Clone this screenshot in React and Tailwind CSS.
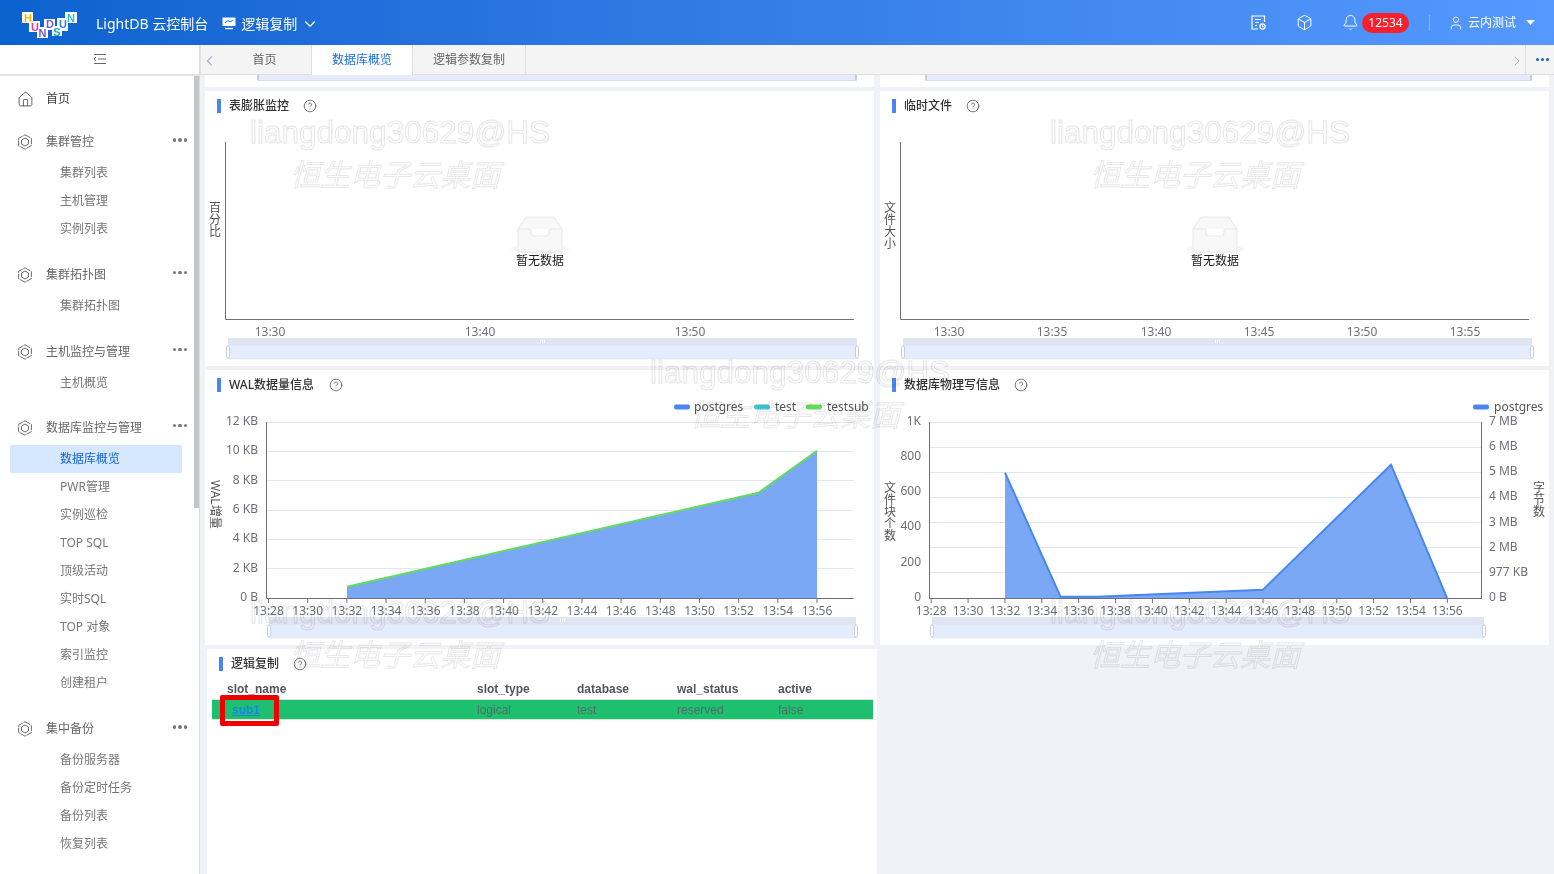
import React from 'react';
import { House, Box, Bell, User, ChevronDown, ChevronLeft, ChevronRight, CircleHelp } from 'lucide-react';

const FONT = '"Noto Sans","Noto Sans CJK SC",sans-serif';

function Logo() {
  const tiles = [[22,13,11,11],[29,22,11,11],[37,28,11,11],[44,20,11,11],[52,27,10,10],[57,19,11,13],[65,13,12,11]];
  const letters = [['H',28,23,'#f7b500'],['U',35,32,'#e0389a'],['N',42.5,37.5,'#6a5bd6'],['D',50,29,'#7a5bd6'],['S',57,36.5,'#18a7b5'],['U',63,29,'#2f7fe0'],['N',71,22.5,'#2cc0d8']];
  return (
    <svg width="70" height="30" viewBox="15 9 70 30" className="shrink-0">
      {tiles.map((t,i)=><rect key={i} x={t[0]} y={t[1]} width={t[2]} height={t[3]} fill="#fff"/>)}
      {letters.map((l,i)=><text key={i} x={l[1]} y={l[2]} textAnchor="middle" fontSize="11" fontWeight="700" fontFamily="Liberation Sans" fill={l[3]}>{l[0]}</text>)}
    </svg>
  );
}

function HexIcon() {
  return (
    <svg width="16" height="16" viewBox="0 0 16 16" fill="none" stroke="#6b6b6b" strokeWidth="1" className="shrink-0">
      <path d="M8 .8 14.4 4.4V11.6L8 15.2 1.6 11.6V4.4Z" strokeDasharray="6.2 0.8"/>
      <path d="M8 4 11.5 6V10L8 12 4.5 10V6Z"/>
    </svg>
  );
}

function Group({ title, items, active, mb, head = 'h-[34px]' }) {
  return (
    <div className={mb}>
      <div className={`flex ${head} items-center pl-[17px] pr-[12px] text-[12px] text-[#666]`}>
        <HexIcon />
        <span className="ml-[13px] flex-1">{title}</span>
        <span className="flex gap-[2px] pb-[4px]">
          <i className="h-[3.5px] w-[3.5px] rounded-full bg-[#777]" />
          <i className="h-[3.5px] w-[3.5px] rounded-full bg-[#777]" />
          <i className="h-[3.5px] w-[3.5px] rounded-full bg-[#777]" />
        </span>
      </div>
      {items.map((t) => (
        <div key={t} className={`ml-[10px] flex h-[28px] w-[172px] items-center pl-[50px] text-[12px] ${t === active ? 'bg-[#d6e8ff] text-[#1565d8]' : 'text-[#777]'}`}>{t}</div>
      ))}
    </div>
  );
}

function Sidebar() {
  return (
    <aside className="relative flex w-[200px] shrink-0 flex-col border-r border-[#dcdcdc] bg-white">
      <div className="flex h-[31px] shrink-0 items-center justify-center border-b-2 border-[#e4e4e4] pb-[1px]">
        <svg width="14" height="12" viewBox="0 0 14 12" fill="none" stroke="#666" strokeWidth="1">
          <path d="M1 1.5H13M5 6H13M1 10.5H13M3 4 1 6 3 8"/>
        </svg>
      </div>
      <div className="pt-[6px]">
        <div className="mb-[9px] flex h-[34px] items-center pl-[17px] text-[12px] text-[#444]">
          <House size={17} strokeWidth={1.3} color="#555" />
          <span className="ml-[12px]">首页</span>
        </div>
        <Group mb="mb-[14px]" title="集群管控" items={['集群列表','主机管理','实例列表']} />
        <Group mb="mb-[14px]" head="h-[35px]" title="集群拓扑图" items={['集群拓扑图']} />
        <Group mb="mb-[13px]" head="h-[35px]" title="主机监控与管理" items={['主机概览']} />
        <Group mb="mb-[15px]" head="h-[35px]" title="数据库监控与管理" active="数据库概览" items={['数据库概览','PWR管理','实例巡检','TOP SQL','顶级活动','实时SQL','TOP 对象','索引监控','创建租户']} />
        <Group title="集中备份" items={['备份服务器','备份定时任务','备份列表','恢复列表']} />
      </div>
      <div className="absolute right-0 top-[31px] h-[432px] w-[5px] bg-[#c6c6c6]" />
    </aside>
  );
}

function Header() {
  return (
    <header className="flex h-[45px] shrink-0 items-center bg-gradient-to-r from-[#0a62cf] to-[#5599ff] pl-[15px] pr-[19px] text-white">
      <Logo />
      <span className="ml-[11px] pt-[2px] text-[14px]">LightDB 云控制台</span>
      <svg width="14" height="13" viewBox="0 0 14 13" className="ml-[14px] mt-[2px]" fill="none">
        <rect x="0.5" y="0.5" width="13" height="8.5" rx="0.5" fill="#fff"/>
        <path d="M3 6 6 3.5 8 5 11 3" stroke="#1a6fd8" strokeWidth="1"/>
        <path d="M3 11.5H11" stroke="#fff" strokeWidth="1.4"/>
      </svg>
      <span className="ml-[5px] pt-[2px] text-[14px]">逻辑复制</span>
      <ChevronDown size={18} strokeWidth={1.5} className="ml-[4px] mt-[3px]" />
      <div className="flex-1" />
      <svg width="15" height="15" viewBox="0 0 15 15" fill="none" stroke="#fff" strokeWidth="1.2">
        <path d="M13.5 7V1H1V14H7"/><path d="M4 4.5H10M4 7.5H8M4 10.5H6"/><circle cx="11.5" cy="11.5" r="2.6"/><path d="M11.5 10.3V11.6H12.6"/>
      </svg>
      <Box size={17} strokeWidth={1.4} className="ml-[30px]" />
      <Bell size={17} strokeWidth={1.4} className="ml-[29px]" />
      <span className="ml-[3px] flex h-[20px] w-[47px] items-center justify-center rounded-full bg-[#f5222d] text-[12px]">12534</span>
      <span className="ml-[20px] h-[16px] w-px bg-[#8cb8f5]" />
      <User size={16} strokeWidth={1.4} className="ml-[18px]" />
      <span className="ml-[4px] text-[12px]">云内测试</span>
      <svg width="9" height="5" viewBox="0 0 9 5" className="ml-[10px]"><path d="M0 0H9L4.5 5Z" fill="#fff"/></svg>
    </header>
  );
}

function Tabs() {
  return (
    <div className="flex h-[30px] shrink-0 items-stretch border-b border-[#dedede] bg-[#f4f4f4] text-[12px] text-[#666]">
      <div className="flex w-[18px] items-center justify-center border-l border-[#e2e2e2] pt-[3px]">
        <ChevronLeft size={18} strokeWidth={1.5} color="#aab4c8" />
      </div>
      <div className="flex w-[94px] items-center justify-center border-r border-[#dedede]">首页</div>
      <div className="-mb-px flex w-[101px] items-center justify-center border-r border-[#dedede] bg-white text-[#1a6fdc]">数据库概览</div>
      <div className="flex w-[113px] items-center justify-center border-r border-[#dedede]">逻辑参数复制</div>
      <div className="flex-1" />
      <div className="flex w-[16px] items-center justify-center pt-[3px]"><ChevronRight size={18} strokeWidth={1.5} color="#aab4c8" /></div>
      <div className="flex w-[29px] items-center justify-center gap-[1.5px] border-l border-[#dedede] pl-[5px]">
        <i className="h-[3.5px] w-[3.5px] rounded-full bg-[#1a5fd0]" /><i className="h-[3.5px] w-[3.5px] rounded-full bg-[#1a5fd0]" /><i className="h-[3.5px] w-[3.5px] rounded-full bg-[#1a5fd0]" />
      </div>
    </div>
  );
}

function Title({ children, gap = 'ml-[14px]' }) {
  return (
    <div className="flex h-[28px] shrink-0 items-center pl-[12px] pt-[1px] text-[12px] font-medium text-[#333]">
      <i className="mr-[8px] h-[14px] w-[4px] bg-[#4a86f0]" />
      <span>{children}</span>
      <CircleHelp size={14} strokeWidth={1.2} color="#444" className={gap} />
    </div>
  );
}

const axisText = { fontSize: 12, fill: '#6e7079', fontFamily: FONT };

function Slider({ x1, x2, y }) {
  return (
    <g>
      <rect x={x1} y={y} width={x2 - x1} height={7} fill="#dfe5f2" />
      <rect x={x1} y={y + 7} width={x2 - x1} height={14} fill="#e5ecfb" stroke="#d6def0" strokeWidth="0.5" />
      <rect x={x1 - 1.5} y={y + 8} width={3} height={12} rx={1.5} fill="#fff" stroke="#c4cde0" />
      <rect x={x2 - 1.5} y={y + 8} width={3} height={12} rx={1.5} fill="#fff" stroke="#c4cde0" />
      <path d={`M${(x1 + x2) / 2 - 2} ${y + 2}v3M${(x1 + x2) / 2} ${y + 2}v3M${(x1 + x2) / 2 + 2} ${y + 2}v3`} stroke="#fff" strokeWidth="1" />
    </g>
  );
}

function VLabel({ x, y, chars }) {
  return chars.split('').map((c, i) => (
    <text key={i} x={x} y={y + i * 12} textAnchor="middle" style={{ fontSize: 12, fill: '#555', fontFamily: FONT }}>{c}</text>
  ));
}

function EmptyBox({ cx }) {
  return (
    <g transform={`translate(${cx - 29} 216)`}>
      <ellipse cx="29" cy="33" rx="29" ry="5" fill="#f6f6f6" />
      <path d="M7 13 15 1H43L51 13V36H7Z" fill="#f8f8f8" stroke="#e8e8e8" />
      <path d="M7 13H19Q20 13 20 15V17Q20 20 23 20H35Q38 20 38 17V15Q38 13 39 13H51" fill="#fff" stroke="#e8e8e8" />
    </g>
  );
}

function EmptyChart({ ox, axis, ylabel, labels, cx, sl }) {
  return (
    <svg width="669" height="247" viewBox={`${ox} 119 669 247`} className="block">
      <path d={`M${axis + 0.5} 142V319.5H${axis + 629}`} fill="none" stroke="#6e7079" />
      <VLabel x={ox + 10} y={212} chars={ylabel} />
      {labels.map(([t, x]) => <text key={t} x={x} y={336} textAnchor="middle" style={axisText}>{t}</text>)}
      <EmptyBox cx={cx} />
      <text x={cx} y={265} textAnchor="middle" style={{ fontSize: 12, fill: '#222', fontFamily: FONT }}>暂无数据</text>
      <Slider x1={sl[0]} x2={sl[1]} y={338} />
    </svg>
  );
}

const times = ['13:28','13:30','13:32','13:34','13:36','13:38','13:40','13:42','13:44','13:46','13:48','13:50','13:52','13:54','13:56'];

function Legend({ x, color, label, textX }) {
  return (
    <g>
      <rect x={x} y={404.5} width={16} height={5} rx={2} fill={color} />
      <text x={textX} y={411} style={{ fontSize: 12, fill: '#555', fontFamily: FONT }}>{label}</text>
    </g>
  );
}

function WalChart() {
  const ys = [422.5, 451.5, 480.5, 510.5, 539.5, 568.5];
  const labels = ['12 KB','10 KB','8 KB','6 KB','4 KB','2 KB','0 B'];
  const ly = [425, 454, 484, 513, 542, 572, 601];
  return (
    <svg width="669" height="247" viewBox="205 398 669 247" className="block">
      <Legend x={674} color="#4a86f0" label="postgres" textX={694} />
      <Legend x={754} color="#3fc8d4" label="test" textX={775} />
      <Legend x={806} color="#62dc5e" label="testsub" textX={827} />
      {ys.map((y) => <path key={y} d={`M266 ${y}H853.5`} stroke="#e0e6f1" />)}
      <path d="M266.5 422V598.5H853.5" fill="none" stroke="#6e7079" />
      {times.map((t, i) => {
        const x = 268.5 + i * 39.18;
        return (
          <g key={t}>
            <path d={`M${x} 598V603`} stroke="#6e7079" />
            <text x={x} y={615} textAnchor="middle" style={axisText}>{t}</text>
          </g>
        );
      })}
      {labels.map((t, i) => <text key={t} x={258} y={ly[i]} textAnchor="end" style={axisText}>{t}</text>)}
      <path d="M347 586.7 758.5 492.7 817 450.7V598H347Z" fill="#7aa8f5" />
      <path d="M347 586.7 758.5 492.7 817 450.7" fill="none" stroke="#62dc5e" strokeWidth="2" />
      <text transform="translate(211 480) rotate(90)" style={{ fontSize: 12, fill: '#555', fontFamily: FONT }}>WAL增量</text>
      <Slider x1={269} x2={856} y={617} />
    </svg>
  );
}

function IoChart() {
  const ys = [422.5, 447.5, 472.5, 497.5, 522.5, 547.5, 572.5];
  const left = [['1K',425],['800',460],['600',495],['400',530],['200',566],['0',601]];
  const right = [['7 MB',425],['6 MB',450],['5 MB',475],['4 MB',500],['3 MB',526],['2 MB',551],['977 KB',576],['0 B',601]];
  return (
    <svg width="669" height="247" viewBox="880 398 669 247" className="block">
      <Legend x={1473} color="#4a86f0" label="postgres" textX={1494} />
      {ys.map((y) => <path key={y} d={`M930 ${y}H1481`} stroke="#e0e6f1" />)}
      <path d="M929.5 422V598.5H1481.5V422" fill="none" stroke="#6e7079" />
      {times.map((t, i) => {
        const x = 931.2 + i * 36.87;
        return (
          <g key={t}>
            <path d={`M${x} 598V603`} stroke="#6e7079" />
            <text x={x} y={615} textAnchor="middle" style={axisText}>{t}</text>
          </g>
        );
      })}
      {left.map(([t, y]) => <text key={t} x={921} y={y} textAnchor="end" style={axisText}>{t}</text>)}
      {right.map(([t, y]) => <text key={t} x={1489} y={y} style={axisText}>{t}</text>)}
      <path d="M1005 472.7 1060.5 596.7 1097 596.7 1263 589.7 1391 464.7 1447 598H1005Z" fill="#7aa8f5" />
      <path d="M1005 472.7 1060.5 596.7 1097 596.7 1263 589.7 1391 464.7 1447 598" fill="none" stroke="#4a86f0" strokeWidth="2" />
      <VLabel x={890} y={492} chars="文件块个数" />
      <VLabel x={1539} y={492} chars="字节数" />
      <Slider x1={932} x2={1484} y={617} />
    </svg>
  );
}

function Panel({ title, gap, children }) {
  return (
    <section className="flex h-[275px] w-[669px] flex-col overflow-hidden bg-white">
      <Title gap={gap}>{title}</Title>
      {children}
    </section>
  );
}

function TopSliver({ left, right }) {
  return (
    <div className="flex h-[12px] w-[669px] bg-white">
      <div style={{ marginLeft: left, width: right - left }} className="h-[5px] border-x-2 border-[#c4cde0] bg-[#e5ecfb] shadow-[0_1px_0_#d6def0]" />
    </div>
  );
}

function Table() {
  const cols = 'grid grid-cols-[250px_100px_100px_101px_1fr] pl-[15px]';
  return (
    <section className="flex w-[670px] flex-col self-stretch bg-white">
      <Title gap="ml-[14px]">逻辑复制</Title>
      <div className="pl-[5px] font-['Liberation_Sans',sans-serif] text-[12px]">
        <div className={`${cols} h-[22px] items-center pt-[2px] font-bold text-[#55555f]`}>
          <span>slot_name</span><span>slot_type</span><span>database</span><span>wal_status</span><span>active</span>
        </div>
        <div className={`${cols} relative h-[21px] w-[661px] items-center border-y border-[#d8e4dc] bg-[#1cc06e] text-[#5a6b68]`}>
          <span className="pl-[5px] font-bold text-[#1a85e8] underline">sub1</span>
          <span>logical</span><span>test</span><span>reserved</span><span>false</span>
          <i className="absolute left-[8px] top-[-5px] h-[31px] w-[59px] rounded-[2px] border-[5px] border-[#f00000]" />
        </div>
      </div>
    </section>
  );
}

const wmA = "absolute font-['Liberation_Sans',sans-serif] text-[31.5px] leading-none text-transparent [-webkit-text-stroke:1px_#e6e6e6] mix-blend-multiply";
const wmB = "absolute font-['Noto_Sans_CJK_SC',sans-serif] text-[30px] leading-none italic text-transparent [-webkit-text-stroke:1px_#e9e9e9] mix-blend-multiply";

function Watermarks() {
  const pos = [
    ['left-[250px] top-[117px]', 'left-[290px] top-[158px]'],
    ['left-[1050px] top-[117px]', 'left-[1090px] top-[158px]'],
    ['left-[650px] top-[357px]', 'left-[690px] top-[398px]'],
    ['left-[250px] top-[597px]', 'left-[290px] top-[638px]'],
    ['left-[1050px] top-[597px]', 'left-[1090px] top-[638px]'],
  ];
  return (
    <div className="pointer-events-none absolute inset-0 overflow-hidden">
      {pos.map(([a, b]) => (
        <React.Fragment key={a}>
          <span className={`${wmA} ${a}`}>liangdong30629@HS</span>
          <span className={`${wmB} ${b}`}>恒生电子云桌面</span>
        </React.Fragment>
      ))}
    </div>
  );
}

export default function App() {
  return (
    <div className="relative flex h-screen w-full flex-col overflow-hidden bg-[#f0f2f7] font-['Noto_Sans','Noto_Sans_CJK_SC',sans-serif]">
      <Header />
      <div className="flex min-h-0 flex-1">
        <Sidebar />
        <main className="flex min-w-0 flex-1 flex-col">
          <Tabs />
          <div className="flex min-h-0 flex-1 flex-col gap-[4px] pl-[5px]">
            <div className="flex gap-[6px]">
              <TopSliver left={52} right={652} />
              <TopSliver left={45} right={652} />
            </div>
            <div className="flex gap-[6px]">
              <Panel title="表膨胀监控">
                <EmptyChart ox={205} axis={225} ylabel="百分比" cx={540} sl={[228, 857]}
                  labels={[['13:30',270],['13:40',480],['13:50',690]]} />
              </Panel>
              <Panel title="临时文件">
                <EmptyChart ox={880} axis={900} ylabel="文件大小" cx={1215} sl={[903, 1532]}
                  labels={[['13:30',949],['13:35',1052],['13:40',1156],['13:45',1259],['13:50',1362],['13:55',1465]]} />
              </Panel>
            </div>
            <div className="flex gap-[6px]">
              <Panel title="WAL数据量信息" gap="ml-[15px]"><WalChart /></Panel>
              <Panel title="数据库物理写信息"><IoChart /></Panel>
            </div>
            <div className="flex min-h-0 flex-1 pl-[2px]"><Table /></div>
          </div>
        </main>
      </div>
      <Watermarks />
    </div>
  );
}
